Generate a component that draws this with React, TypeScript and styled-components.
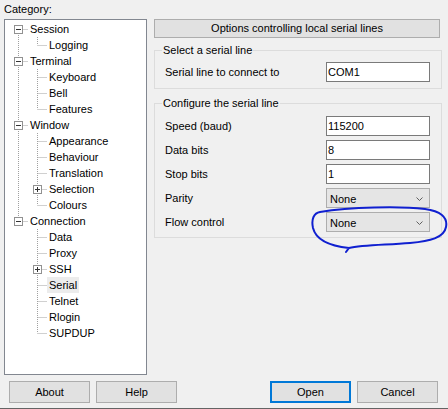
import * as React from "react";
import styled, { createGlobalStyle } from "styled-components";

const GlobalStyle = createGlobalStyle`
  html, body {
    margin: 0;
    padding: 0;
    background: #f0f0f0;
  }
  body {
    font-family: "Liberation Sans", Arial, sans-serif;
    font-size: 11px;
    color: #000;
  }
`;

interface Node {
  label: string
  children?: Node[]
  collapsed?: boolean
  selected?: boolean
}

const tree: Node[] = [
  { label: "Session", children: [{ label: "Logging" }] },
  { label: "Terminal", children: [{ label: "Keyboard" }, { label: "Bell" }, { label: "Features" }] },
  {
    label: "Window",
    children: [
      { label: "Appearance" },
      { label: "Behaviour" },
      { label: "Translation" },
      { label: "Selection", collapsed: true },
      { label: "Colours" },
    ],
  },
  {
    label: "Connection",
    children: [
      { label: "Data" },
      { label: "Proxy" },
      { label: "SSH", collapsed: true },
      { label: "Serial", selected: true },
      { label: "Telnet" },
      { label: "Rlogin" },
      { label: "SUPDUP" },
    ],
  },
];

interface Row {
  label: string
  depth: number
  first: boolean
  last: boolean
  through: boolean[]
  expander: "plus" | "minus" | null
  selected: boolean
}

const flatten = (nodes: Node[], depth = 0, through: boolean[] = []): Row[] => {
  const rows: Row[] = [];
  nodes.forEach((n, i) => {
    const last = i === nodes.length - 1;
    const hasKids = n.collapsed || (n.children && n.children.length > 0);
    rows.push({
      label: n.label,
      depth,
      first: depth === 0 && i === 0,
      last,
      through,
      expander: hasKids ? (n.collapsed ? "plus" : "minus") : null,
      selected: !!n.selected,
    });
    if (n.children && !n.collapsed) {
      rows.push(...flatten(n.children, depth + 1, [...through, !last]));
    }
  });
  return rows;
};

const DOT = "#a0a0a0";

const Connector = ({ row }: { row: Row }) => {
  const w = 19 * row.depth + 23;
  const cx = 13 + 19 * row.depth + 0.5;
  return (
    <svg width={w} height={16} style={{ flex: "none", display: "block" }}>
      <g stroke={DOT} strokeWidth={1} strokeDasharray="1 1" fill="none">
        {row.through.map((on, i) =>
          on ? <line key={i} x1={13.5 + 19 * i} y1={0} x2={13.5 + 19 * i} y2={16} /> : null
        )}
        {!row.first && <line x1={cx} y1={0} x2={cx} y2={8} />}
        {!row.last && <line x1={cx} y1={8} x2={cx} y2={16} />}
        <line x1={cx} y1={8.5} x2={cx + 10} y2={8.5} />
      </g>
      {row.expander && (
        <g>
          <rect x={cx - 4} y={4.5} width={8} height={8} fill="#fff" stroke="#919191" />
          <line x1={cx - 2.5} y1={8.5} x2={cx + 2.5} y2={8.5} stroke="#333" />
          {row.expander === "plus" && (
            <line x1={cx} y1={6} x2={cx} y2={11} stroke="#333" />
          )}
        </g>
      )}
    </svg>
  );
};

const Chevron = () => (
  <svg width={7} height={4} style={{ display: "block" }}>
    <polyline points="0.5,0.5 3.5,3.5 6.5,0.5" fill="none" stroke="#606060" />
  </svg>
);

const App = () => {
  const rows = flatten(tree);
  return (
    <>
      <GlobalStyle />
      <Window>
        <Main>
          <LeftCol>
            <CategoryLabel>Category:</CategoryLabel>
            <TreeBox>
              {rows.map((r) => (
                <TreeRow key={r.label}>
                  <Connector row={r} />
                  <TreeText $selected={r.selected}>{r.label}</TreeText>
                </TreeRow>
              ))}
            </TreeBox>
          </LeftCol>
          <RightCol>
            <Header>Options controlling local serial lines</Header>
            <Group $top={6} $bottom={6} $padTop={5}>
              <legend>Select a serial line</legend>
              <FieldRow>
                <FieldLabel>Serial line to connect to</FieldLabel>
                <TextBox readOnly value="COM1" />
              </FieldRow>
            </Group>
            <Group $top={8} $bottom={5} $padTop={6}>
              <legend>Configure the serial line</legend>
              <FieldRow>
                <FieldLabel>Speed (baud)</FieldLabel>
                <TextBox readOnly value="115200" />
              </FieldRow>
              <FieldRow>
                <FieldLabel>Data bits</FieldLabel>
                <TextBox readOnly value="8" />
              </FieldRow>
              <FieldRow>
                <FieldLabel>Stop bits</FieldLabel>
                <TextBox readOnly value="1" />
              </FieldRow>
              <FieldRow>
                <FieldLabel>Parity</FieldLabel>
                <Combo>
                  <span>None</span>
                  <Chevron />
                </Combo>
              </FieldRow>
              <FieldRow>
                <FieldLabel>Flow control</FieldLabel>
                <Combo>
                  <span>None</span>
                  <Chevron />
                </Combo>
              </FieldRow>
            </Group>
          </RightCol>
        </Main>
        <ButtonRow>
          <ButtonGroup>
            <Button>About</Button>
            <Button>Help</Button>
          </ButtonGroup>
          <ButtonGroup>
            <Button $default>Open</Button>
            <Button>Cancel</Button>
          </ButtonGroup>
        </ButtonRow>
        <Scribble width={448} height={409} viewBox="0 0 448 409">
          <path
            d="M 320 212 C 350 207, 400 206, 425 209 C 440 211, 448 217, 446 227 C 444 238, 430 241, 410 243 C 385 245, 362 245, 349 248 L 346 252 M 349 248 C 330 246, 316 240, 313 228 C 311 219, 314 213, 320 212"
            fill="none"
            stroke="#1020d0"
            strokeWidth={2}
            strokeLinecap="round"
          />
        </Scribble>
      </Window>
    </>
  );
};

const Window = styled.div`
  position: relative;
  width: 448px;
  height: 409px;
  box-sizing: border-box;
  border-bottom: 1px solid #646464;
  display: flex;
  flex-direction: column;
  overflow: hidden;
`;

const Main = styled.div`
  display: flex;
  gap: 7px;
  padding: 3px 0 0 4px;
`;

const LeftCol = styled.div`
  width: 143px;
  display: flex;
  flex-direction: column;
`;

const CategoryLabel = styled.div`
  height: 16px;
  line-height: 13px;
`;

const TreeBox = styled.div`
  height: 356px;
  box-sizing: border-box;
  border: 1px solid #828790;
  background: #fff;
  padding-top: 1px;
`;

const TreeRow = styled.div`
  display: flex;
  align-items: center;
  height: 16px;
`;

const TreeText = styled.span<{ $selected?: boolean }>`
  padding: 0 2px;
  line-height: 16px;
  white-space: nowrap;
  background: ${(p) => (p.$selected ? "#ececec" : "transparent")};
`;

const RightCol = styled.div`
  width: 288px;
  padding-top: 16px;
  display: flex;
  flex-direction: column;
`;

const Header = styled.div`
  height: 19px;
  margin-right: 2px;
  box-sizing: border-box;
  border: 1px solid #adadad;
  background: #e1e1e1;
  text-align: center;
  line-height: 17px;
`;

const Group = styled.fieldset<{ $top: number; $bottom: number; $padTop: number }>`
  margin: ${(p) => p.$top}px 0 0 0;
  padding: ${(p) => p.$padTop}px 11px ${(p) => p.$bottom}px 9px;
  border: 1px solid #dcdcdc;
  display: flex;
  flex-direction: column;
  gap: 4px;
  min-width: 0;

  legend {
    margin-left: -2px;
    padding: 0 1px;
    line-height: 13px;
    font-size: 11px;
  }
`;

const FieldRow = styled.div`
  display: flex;
  align-items: center;
  height: 20px;
`;

const FieldLabel = styled.div`
  flex: 1;
  padding-left: 1px;
`;

const TextBox = styled.input`
  width: 104px;
  height: 20px;
  box-sizing: border-box;
  margin: 0;
  border: 1px solid #7a7a7a;
  background: #fff;
  padding: 0 1px;
  font-family: "Liberation Sans", Arial, sans-serif;
  font-size: 11px;
  color: #000;
  outline: none;
`;

const Combo = styled.div`
  width: 104px;
  height: 20px;
  box-sizing: border-box;
  border: 1px solid #adadad;
  background: #e5e5e5;
  display: flex;
  align-items: center;
  justify-content: space-between;
  padding: 1px 6px 0 3px;
`;

const ButtonRow = styled.div`
  display: flex;
  justify-content: space-between;
  margin-top: 6px;
  padding: 0 10px 0 9px;
`;

const ButtonGroup = styled.div`
  display: flex;
  gap: 6px;
`;

const Button = styled.button<{ $default?: boolean }>`
  width: 81px;
  height: 22px;
  box-sizing: border-box;
  margin: 0;
  padding: 0;
  background: #e1e1e1;
  border: ${(p) => (p.$default ? "2px solid #0078d7" : "1px solid #adadad")};
  font-family: "Liberation Sans", Arial, sans-serif;
  font-size: 11px;
  color: #000;
`;

const Scribble = styled.svg`
  position: absolute;
  left: 0;
  top: 0;
  pointer-events: none;
`;

export default App;
